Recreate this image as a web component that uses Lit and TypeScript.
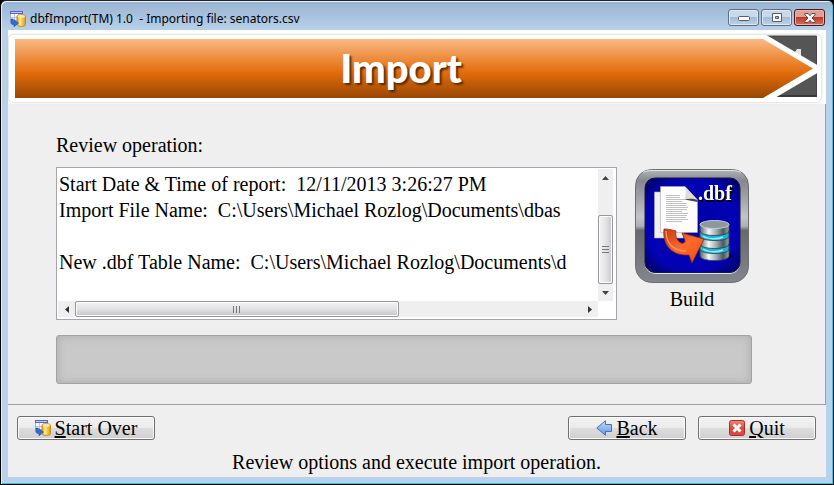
import { LitElement, html, svg, css } from "lit";
import { customElement } from "lit/decorators.js";

const REPORT = [
  "Start Date & Time of report:  12/11/2013 3:26:27 PM",
  "Import File Name:  C:\\Users\\Michael Rozlog\\Documents\\dbas",
  "",
  "New .dbf Table Name:  C:\\Users\\Michael Rozlog\\Documents\\d",
].join("\n");

const importIcon = () => html`
  <svg width="16" height="16" viewBox="0 0 16 16" aria-hidden="true">
    <defs>
      <linearGradient id="gold" x1="0" x2="1">
        <stop offset="0" stop-color="#e0a010" />
        <stop offset=".35" stop-color="#ffe98c" />
        <stop offset="1" stop-color="#d99a14" />
      </linearGradient>
    </defs>
    <rect x=".5" y=".5" width="12" height="11" fill="#f4f6fc" stroke="#a5acd8" />
    <rect x="0" y="0" width="13" height="3" fill="#5b66c4" />
    <path d="M1 1.5h11" stroke="#c3c9f2" />
    <path d="M4.5 3v9M8.5 3v9M1 6.5h11M1 9.5h11" stroke="#bcc3e4" />
    <path d="M7 5.500c0-2.400 8.500-2.400 8.500 0v8c0 2.600-8.500 2.600-8.500 0z" fill="url(#gold)" stroke="#c78a12" />
    <ellipse cx="11.300" cy="5.400" rx="3.600" ry="1.300" fill="#ffe9a0" />
    <path d="M1 8v3.500c0 1.500 1 2 2.500 2H4v2.300L8.500 12 4 8.800V11H3.200V8z" fill="#2f6fd0" stroke="#1d4ea8" stroke-width=".6" />
  </svg>
`;

const backIcon = () => html`
  <svg width="16" height="16" viewBox="0 0 16 16" aria-hidden="true">
    <defs>
      <linearGradient id="sky" x2="0" y2="1">
        <stop offset="0" stop-color="#c3dcfa" />
        <stop offset="1" stop-color="#5c97e4" />
      </linearGradient>
    </defs>
    <path d="M.8 8 9.500 .7V4.500h6v7h-6v3.800z" fill="url(#sky)" stroke="#4a6fb4" stroke-linejoin="round" />
  </svg>
`;

const quitIcon = () => html`
  <svg width="16" height="16" viewBox="0 0 16 16" aria-hidden="true">
    <defs>
      <linearGradient id="red" x2="0" y2="1">
        <stop offset="0" stop-color="#f08a78" />
        <stop offset=".5" stop-color="#dc4a40" />
        <stop offset="1" stop-color="#d84848" />
      </linearGradient>
    </defs>
    <rect x=".5" y=".5" width="15" height="15" rx="2" fill="url(#red)" stroke="#b02a28" />
    <path d="m4.500 4.500 7 7m0-7-7 7" stroke="#fff" stroke-width="3" />
  </svg>
`;

const glow = (y: number) => svg`
  <path d="M65 ${y}c0 6 29 6 29 0v5c0 6-29 6-29 0z" fill="#1fb4d4" stroke="#243a46" stroke-width=".8" />
  <path d="M68 ${y + 5}c5 3.500 15 3.500 20 1" fill="none" stroke="#8cf2ff" stroke-width="1.500" />
`;

const textRows = Array.from({ length: 14 }, (_, i) => 26.5 + i * 2);

const buildArt = () => html`
  <svg class="art" width="114" height="114" viewBox="0 0 114 114" aria-hidden="true">
    <defs>
      <linearGradient id="rim" x2="0" y2="1">
        <stop offset="0" stop-color="#b4b6ba" />
        <stop offset=".1" stop-color="#85878c" />
        <stop offset=".42" stop-color="#c2c4c8" />
        <stop offset=".5" stop-color="#aeb0b4" />
        <stop offset=".54" stop-color="#67696e" />
        <stop offset="1" stop-color="#84868d" />
      </linearGradient>
      <radialGradient id="blue" cx=".5" cy=".5" r=".72">
        <stop offset="0" stop-color="#0000a4" />
        <stop offset=".68" stop-color="#0202b4" />
        <stop offset="1" stop-color="#02024e" />
      </radialGradient>
      <linearGradient id="steel">
        <stop offset="0" stop-color="#59646a" />
        <stop offset=".3" stop-color="#f4f8f8" />
        <stop offset=".55" stop-color="#a4b0b4" />
        <stop offset=".8" stop-color="#4c585e" />
        <stop offset="1" stop-color="#9aa6aa" />
      </linearGradient>
      <linearGradient id="flame" x2="1" y2="1">
        <stop offset="0" stop-color="#c83c10" />
        <stop offset=".5" stop-color="#ff6a2c" />
        <stop offset="1" stop-color="#e84c14" />
      </linearGradient>
    </defs>
    <rect x=".5" y=".5" width="113" height="113" rx="16" fill="url(#rim)" stroke="#6c6e72" />
    <path d="M8 3.500C10 2 13 1.500 17 1.500H97c4 0 7 .5 9 2" fill="none" stroke="#e4e4e6" />
    <rect x="10" y="10" width="95" height="95" rx="10" fill="#dfe2ea" />
    <rect x="10" y="9" width="95" height="94.500" rx="10" fill="url(#blue)" stroke="#16183a" />
    <path d="M19.500 23h29v46h-29z" fill="#f0f0f0" stroke="#b0b0b0" stroke-width=".6" />
    <path d="M25.500 17.500H50L62.500 31v32.500h-37z" fill="#fdfdfd" stroke="#a8a8a8" stroke-width=".6" />
    <path d="M50 17.500c1 4 1 9-.5 13 4-1 9-1 13 .5z" fill="#dcdcdc" />
    <path d="M49.500 30.500c4-1 9-1 13 .5v2z" fill="#444" />
    ${textRows.map((y, i) => {
      const width = i % 5 === 3 ? 16 : y < 30 ? 14 : 22 - (i % 3);
      return svg`<path d="M31 ${y}h${width}" stroke="#999" stroke-width=".6" />`;
    })}
    <ellipse cx="81" cy="87" rx="17" ry="4" fill="#000040" />
    <path d="M65 55v32c0 6 29 6 29 0V55z" fill="url(#steel)" stroke="#3c4650" stroke-width=".8" />
    <ellipse cx="79.500" cy="55.500" rx="14.500" ry="4" fill="#8e989c" stroke="#c4ccd0" />
    ${glow(62)} ${glow(75)}
    <path d="M29 60c5 0 8 1 12 2-1 5 1 10 5 12 4 1 5-2 3-5l-2-5 22 6-12 24-3-8c-14 1-27-7-25-26z" fill="url(#flame)" stroke="#8c2a0c" stroke-width=".8" />
    <path d="M31 62c0 12 7 20 20 20" fill="none" stroke="#ffa070" stroke-width="1.200" />
    <text class="ext" x="63" y="31">.dbf</text>
  </svg>
`;

@customElement("app-root")
export class AppRoot extends LitElement {
  static styles = css`
    :host {
      display: block;
      min-height: 100vh;
      background: #000;
      font: 20px/26px "Book Antiqua", "Palatino Linotype", "Liberation Serif", serif;
      color: #000;
    }
    * {
      box-sizing: border-box;
    }
    .window {
      display: flex;
      flex-direction: column;
      min-height: 100vh;
      padding: 0 6px 7px;
      border: 1px solid #000;
      border-top-color: #222;
      border-radius: 6px 6px 0 0;
      background: linear-gradient(#98b3d1, #b9d1ea 30px, #b9d1ea 90px, #b9d1ea);
      box-shadow: inset 1px 1px #e6eef6, inset -1px -1px #35c8e4;
    }
    .titlebar {
      display: flex;
      align-items: center;
      height: 29px;
      padding: 6px 2px 0 3px;
      gap: 4px;
    }
    .caption {
      flex: 1;
      margin: 0;
      font: 12px/16px "Segoe UI", "Noto Sans", sans-serif;
      white-space: pre;
    }
    .winbuttons {
      display: flex;
      gap: 2px;
      padding-bottom: 2px;
    }
    .winbtn {
      display: flex;
      align-items: center;
      justify-content: center;
      width: 31px;
      height: 17px;
      padding: 0;
      border: 1px solid #5d6f86;
      border-radius: 3px;
      background: linear-gradient(#c9d9ea 50%, #a3bbd5 50%, #bdd2e8);
      box-shadow: inset 0 0 0 1px #dfe9f4;
    }
    .winbtn.close {
      border-color: #4c1a20;
      background: linear-gradient(#e0a194 45%, #bd3c28 50%, #d2715c);
      box-shadow: inset 0 0 0 1px #e8b4a8;
    }
    .client {
      flex: 1;
      display: flex;
      flex-direction: column;
      margin: 0 1px;
      background: #efefef;
    }
    .banner {
      display: flex;
      height: 74px;
      padding: 5px 5px 2px 1px;
      background: #fff;
    }
    .frame {
      flex: 1;
      display: flex;
      padding: 4px 3px 4px 6px;
      border-radius: 4px;
      box-shadow: 0 0 3px #bbb;
    }
    .bar {
      flex: 1;
      display: flex;
      align-items: center;
      justify-content: center;
      padding-left: 24px;
      height: 59px;
      background: linear-gradient(#fab984, #e36c0a 57%, #984604);
    }
    .heading {
      margin: 0;
      font: 900 40px/59px Lato, sans-serif;
      color: #fff;
      text-shadow: 2px 2px 2px #5a2a04;
    }
    .tip {
      flex: none;
      margin: -4px -1px 0 0;
    }
    .panel {
      flex: 1;
      padding: 28px 73px 20px 48px;
      border-right: 1px solid #a0a0a0;
      border-bottom: 1px solid #a0a0a0;
    }
    .label {
      display: block;
      margin-bottom: 9px;
    }
    .row {
      display: flex;
      gap: 18px;
      margin-bottom: 15px;
      padding-right: 3px;
    }
    .memo {
      flex: 1;
      min-width: 0;
      display: grid;
      grid-template: 132px 17px / 1fr 17px;
      padding: 1px;
      border: 1px solid #a4a6ac;
      background: #fff;
    }
    .report {
      display: block;
      width: 100%;
      height: 100%;
      padding: 2px 0 0 1px;
      border: 0;
      outline: 0;
      resize: none;
      overflow: hidden;
      white-space: pre;
      background: #fff;
      color: inherit;
      font: inherit;
    }
    .scroll {
      display: flex;
      align-items: center;
      background: #efefef;
      min-width: 0;
    }
    .scroll.v {
      flex-direction: column;
      margin-right: 2px;
    }
    .scroll.h {
      margin-bottom: 1px;
    }
    .arrow {
      flex: none;
      display: flex;
      align-items: center;
      justify-content: center;
      width: 17px;
      height: 17px;
      padding: 0;
      border: 0;
      background: none;
    }
    .track {
      flex: 1;
      display: flex;
    }
    .v .track {
      align-items: flex-end;
      width: 100%;
    }
    .h .track {
      height: 100%;
    }
    .thumb {
      display: flex;
      align-items: center;
      justify-content: center;
      border: 1px solid #97979b;
      border-radius: 2px;
      box-shadow: inset 0 0 0 1px #fbfbfb;
    }
    .v .thumb {
      width: 100%;
      height: 69px;
      background: linear-gradient(90deg, #f4f4f4, #e4e4e6 50%, #c8c8cc);
    }
    .h .thumb {
      width: 64%;
      height: 100%;
      background: linear-gradient(#f4f4f4, #e2e2e4 50%, #c4c4c6);
    }
    .build {
      flex: none;
      display: flex;
      flex-direction: column;
      align-items: center;
      gap: 3px;
      width: 114px;
      margin-top: 2px;
      padding: 0;
      border: 0;
      background: none;
      font: inherit;
      color: inherit;
    }
    .art {
      flex: none;
    }
    .ext {
      font: bold 20px "Liberation Serif", serif;
      fill: #fff;
      filter: drop-shadow(1px 2px 0 #000);
    }
    .progress {
      display: block;
      appearance: none;
      width: 100%;
      height: 49px;
      border: 1px solid #a2a2a2;
      border-radius: 3px;
      background: #c9c9c9;
      box-shadow: inset 0 0 8px #aaa;
    }
    .progress::-webkit-progress-bar {
      background: none;
    }
    .footer {
      padding: 11px 10px 2px 9px;
    }
    .buttons {
      display: flex;
      gap: 12px;
      margin-bottom: 9px;
    }
    .btn {
      display: flex;
      align-items: center;
      justify-content: center;
      gap: 4px;
      width: 118px;
      height: 24px;
      padding: 0;
      border: 1px solid #707070;
      border-radius: 3px;
      background: linear-gradient(#f2f2f2, #ebebeb 50%, #dddddd 50%, #cfcfcf);
      box-shadow: inset 0 0 0 1px #fafafa;
      font: inherit;
      color: inherit;
    }
    .btn.wide {
      width: 138px;
      margin-right: auto;
    }
    .status {
      margin: 0;
      text-align: center;
    }
  `;

  render() {
    return html`
      <div class="window">
        <header class="titlebar">
          ${importIcon()}
          <p class="caption">dbfImport(TM) 1.0  - Importing file: senators.csv</p>
          <div class="winbuttons">
            <button class="winbtn" aria-label="Minimize">
              <svg width="12" height="6" viewBox="0 0 12 6"><rect x=".5" y="1.500" width="11" height="4" rx="1" fill="#fff" stroke="#535d6c" /></svg>
            </button>
            <button class="winbtn" aria-label="Maximize">
              <svg width="12" height="10" viewBox="0 0 12 10"><path d="M1.500.5h9v8h-9zM4.500 3.500v2h3v-2z" fill="#fff" fill-rule="evenodd" stroke="#535d6c" /></svg>
            </button>
            <button class="winbtn close" aria-label="Close">
              <svg width="12" height="10" viewBox="0 0 12 10"><path d="M.8.6h3.400L6 2.700 7.800.6h3.400v1L8 5l3.200 3.400v1H7.800L6 7.300 4.200 9.400H.8v-1L4 5 .8 1.600z" fill="#fff" stroke="#5a4048" /></svg>
            </button>
          </div>
        </header>
        <main class="client">
          <div class="banner">
            <div class="frame">
              <div class="bar"><h1 class="heading">Import</h1></div>
              <svg class="tip" width="56" height="66" viewBox="0 0 56 66" aria-hidden="true">
                <defs>
                  <linearGradient id="ember" gradientUnits="userSpaceOnUse" x1="0" x2="0" y1="4" y2="63">
                    <stop offset="0" stop-color="#fab984" />
                    <stop offset=".57" stop-color="#e36c0a" />
                    <stop offset="1" stop-color="#984604" />
                  </linearGradient>
                </defs>
                <rect x="0" y="1" width="54" height="61" fill="#555" />
                <path d="M0 1h53.500v60.500" fill="none" stroke="#444" />
                <path d="M13 61h41" stroke="#383838" stroke-width="2" />
                <path d="m32 17 2-3h4v11h-6z" fill="#e4e4e4" />
                <path d="M0-2 56 31v6L0 70z" fill="#fff" />
                <path d="M0 4 50 33.500 0 63z" fill="url(#ember)" />
              </svg>
            </div>
          </div>
          <section class="panel">
            <label class="label" for="report">Review operation:</label>
            <div class="row">
              <div class="memo">
                <textarea id="report" class="report" readonly wrap="off" spellcheck="false" .value=${REPORT}></textarea>
                <div class="scroll v">
                  <button class="arrow" aria-label="Scroll up"><svg width="7" height="4"><path d="M0 4 3.500 0 7 4z" fill="#444" /></svg></button>
                  <div class="track"><div class="thumb"><svg width="7" height="8"><path d="M0 .5h7M0 3.500h7M0 6.500h7" stroke="#77777c" /></svg></div></div>
                  <button class="arrow" aria-label="Scroll down"><svg width="7" height="4"><path d="M0 0 3.500 4 7 0z" fill="#444" /></svg></button>
                </div>
                <div class="scroll h">
                  <button class="arrow" aria-label="Scroll left"><svg width="4" height="7"><path d="M4 0 0 3.500 4 7z" fill="#333" /></svg></button>
                  <div class="track"><div class="thumb"><svg width="8" height="7"><path d="M.5 0v7M3.500 0v7M6.500 0v7" stroke="#77777c" /></svg></div></div>
                  <button class="arrow" aria-label="Scroll right"><svg width="4" height="7"><path d="M0 0 4 3.500 0 7z" fill="#333" /></svg></button>
                </div>
              </div>
              <button class="build">${buildArt()}<span>Build</span></button>
            </div>
            <progress class="progress" value="0" max="100" aria-label="Import progress"></progress>
          </section>
          <footer class="footer">
            <div class="buttons">
              <button class="btn wide">${importIcon()}<span><u>S</u>tart Over</span></button>
              <button class="btn">${backIcon()}<span><u>B</u>ack</span></button>
              <button class="btn">${quitIcon()}<span><u>Q</u>uit</span></button>
            </div>
            <p class="status">Review options and execute import operation.</p>
          </footer>
        </main>
      </div>
    `;
  }
}
